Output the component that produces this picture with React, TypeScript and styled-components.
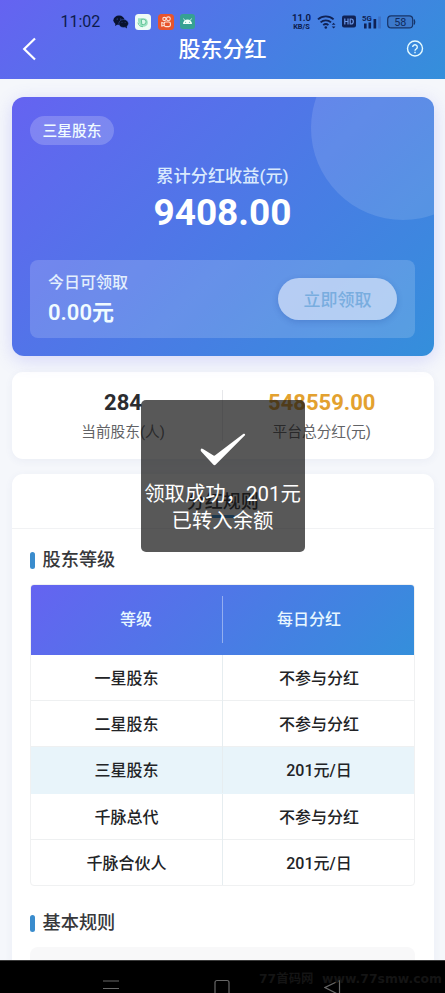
import React from 'react';
import styled, { createGlobalStyle } from 'styled-components';

const Global = createGlobalStyle`
  *, *::before, *::after { box-sizing: border-box; }
  html, body { margin: 0; padding: 0; overflow: hidden; }
  body {
    font-family: Roboto, 'Noto Sans CJK SC', sans-serif;
    color: #2c2d30;
    background: #f5f7fb;
  }
`;

const gradient = 'linear-gradient(135deg, #6563f1 0%, #348fdb 100%)';

const Screen = styled.div`
  width: 445px;
  height: 993px;
  display: flex;
  flex-direction: column;
  overflow: hidden;
  position: relative;
  background: #f5f7fb;
`;

const Header = styled.header`
  flex: none;
  height: 79px;
  background: ${gradient};
`;

const StatusBar = styled.div`
  height: 31px;
  padding: 12px 29px 0 60.5px;
  display: flex;
  justify-content: space-between;
  color: #0c1b4c;
`;

const StatusGroup = styled.div<{ $gap: number }>`
  display: flex;
  align-items: center;
  gap: ${p => p.$gap}px;
  height: 19px;
`;

const Clock = styled.span`
  width: 46px;
  font-size: 16px;
  line-height: 19px;
  white-space: nowrap;
`;

const Speed = styled.div`
  width: 19px;
  display: flex;
  flex-direction: column;
  align-items: center;
  font-weight: 700;
  font-size: 9.5px;
  line-height: 10px;
  white-space: nowrap;
`;

const SpeedUnit = styled.span`
  font-size: 7.4px;
  line-height: 8px;
`;

const TitleBar = styled.div`
  height: 36px;
  padding: 0 21px;
  display: grid;
  grid-template-columns: 18px 1fr 18px;
  align-items: center;
`;

const PageTitle = styled.h1`
  margin: 2px 0 0;
  text-align: center;
  color: #fff;
  font-size: 22px;
  line-height: 30px;
  font-weight: 500;
`;

const Content = styled.main`
  flex: 1;
  min-height: 0;
  overflow: hidden;
  padding: 18px 11.5px 0 12px;
  display: flex;
  flex-direction: column;
`;

const IncomeCard = styled.section`
  flex: none;
  height: 259px;
  padding: 19px 18.5px 18px 18px;
  border-radius: 12px;
  background: ${gradient};
  box-shadow: 0 4px 18px rgba(99, 102, 241, 0.22);
  display: flex;
  flex-direction: column;
  overflow: hidden;
  color: #f0fbff;
  position: relative;
`;

const Glow = styled.div`
  position: absolute;
  right: -61px;
  top: -61px;
  width: 184px;
  height: 184px;
  border-radius: 50%;
  background: rgba(255, 255, 255, 0.12);
`;

const LevelTag = styled.span`
  align-self: flex-start;
  width: 84px;
  height: 29px;
  padding-top: 1px;
  border-radius: 15px;
  background: rgba(255, 255, 255, 0.2);
  font-size: 14.7px;
  line-height: 29px;
  font-weight: 500;
  text-align: center;
`;

const IncomeLabel = styled.div`
  margin-top: 18px;
  text-align: center;
  font-size: 17.2px;
  line-height: 26px;
  color: #d9e9fd;
  font-weight: 500;
`;

const IncomeValue = styled.div`
  margin-top: 3px;
  text-align: center;
  font-size: 37px;
  line-height: 42px;
  font-weight: 700;
  color: #fff;
`;

const ClaimPanel = styled.div`
  margin-top: auto;
  height: 78px;
  padding: 0 18px;
  border-radius: 8px;
  background: rgba(255, 255, 255, 0.16);
  display: flex;
  align-items: center;
  justify-content: space-between;
`;

const ClaimLabel = styled.div`
  font-size: 16px;
  line-height: 24px;
  font-weight: 500;
  color: #e3effd;
`;

const ClaimValue = styled.div`
  margin-top: 3px;
  font-size: 22px;
  line-height: 29px;
  font-weight: 600;
`;

const ClaimButton = styled.button`
  width: 119px;
  height: 42px;
  padding: 1px 0 0;
  border: 0;
  border-radius: 21px;
  background: rgba(226, 234, 251, 0.66);
  box-shadow: 0 2px 6px rgba(20, 50, 140, 0.2);
  color: #79addf;
  font: 500 17px/42px Roboto, 'Noto Sans CJK SC', sans-serif;
`;

const StatsCard = styled.section`
  flex: none;
  margin-top: 16px;
  height: 87px;
  border-radius: 11px;
  background: #fff;
  box-shadow: 0 2px 8px rgba(70, 80, 150, 0.06);
  display: grid;
  grid-template-columns: 210px 1px 1fr;
  align-items: center;
`;

const Separator = styled.div<{ $light?: boolean }>`
  width: 1px;
  height: ${p => (p.$light ? 47 : 51)}px;
  background: ${p => (p.$light ? 'rgba(255,255,255,0.4)' : '#e6e7ea')};
`;

const Stat = styled.div<{ $left?: number; $right?: number }>`
  padding: 1px ${p => p.$right ?? 0}px 0 ${p => p.$left ?? 0}px;
  text-align: center;
`;

const StatValue = styled.div<{ $color: string }>`
  color: ${p => p.$color};
  font-size: 22px;
  line-height: 28px;
  font-weight: 700;
`;

const StatLabel = styled.div`
  margin-top: 3px;
  color: #626366;
  font-size: 14.7px;
  line-height: 24px;
`;

const RulesCard = styled.section`
  flex: none;
  margin-top: 15px;
  height: 520px;
  border-radius: 11px;
  background: #fff;
  box-shadow: 0 2px 8px rgba(70, 80, 150, 0.06);
`;

const RulesHead = styled.div`
  height: 55px;
  padding-top: 14px;
  border-bottom: 1px solid #f1f2f4;
  display: flex;
  flex-direction: column;
  align-items: center;
`;

const RulesTitle = styled.h2`
  margin: 0;
  font-size: 18px;
  line-height: 27px;
  font-weight: 500;
`;

const Underline = styled.div`
  width: 24px;
  height: 3px;
  border-radius: 2px;
  background: #348fdb;
`;

const RulesBody = styled.div`
  padding: 17px 19px 0 18px;
`;

const SectionTitle = styled.h3`
  margin: 0;
  height: 28px;
  display: flex;
  align-items: center;
  gap: 7.5px;
  font-size: 18.2px;
  line-height: 28px;
  font-weight: 500;
  color: #37383b;

  &::before {
    content: '';
    width: 5px;
    height: 17px;
    border-radius: 3px;
    background: #3a8ccd;
  }
`;

const Table = styled.div`
  margin: 10px 0 23px;
  width: 385px;
  height: 302px;
  border: 1px solid #f0f1f2;
  border-radius: 4px;
  overflow: hidden;
`;

const TableHead = styled.div`
  margin: -1px -1px 0;
  height: 71px;
  background: ${gradient};
  display: grid;
  grid-template-columns: 192px 1px 192px;
  align-items: center;
`;

const HeadCell = styled.div<{ $left?: number; $right?: number }>`
  padding: 1px ${p => p.$right ?? 0}px 0 ${p => p.$left ?? 0}px;
  text-align: center;
  color: #e8f7ff;
  font-size: 16px;
  line-height: 24px;
  font-weight: 500;
`;

const Row = styled.div<{ $active?: boolean }>`
  margin: 0 -1px;
  height: 46.2px;
  display: grid;
  grid-template-columns: 193px 192px;
  border-bottom: 1px solid ${p => (p.$active ? '#e8f4fa' : '#eef0f1')};
  background: ${p => (p.$active ? '#e8f4fa' : 'transparent')};

  &:last-child { border-bottom: 0; }
`;

const Cell = styled.div`
  text-align: center;
  font-size: 16px;
  line-height: 47px;
  height: 46px;
  font-weight: 500;
  color: #222326;

  &:first-child { border-right: 1px solid #e6edf0; padding-left: 1px; }
`;

const RuleBox = styled.div`
  margin-top: 10px;
  height: 60px;
  border-radius: 8px;
  background: #f8f8f9;
`;

const NavBar = styled.footer`
  flex: none;
  height: 33px;
  background: #000;
  border-top: 1px solid #3b3b3b;
  padding: 18px 103px 0 103px;
  display: flex;
  justify-content: space-between;
  align-items: flex-start;
  position: relative;
  overflow: hidden;
`;

const Watermark = styled.span`
  position: absolute;
  left: 259px;
  top: 9px;
  font-family: 'DejaVu Sans', 'Noto Sans CJK SC', sans-serif;
  font-weight: 700;
  font-size: 12.4px;
  line-height: 18px;
  color: #141414;
  white-space: pre;
`;

const Toast = styled.div`
  position: absolute;
  left: 140.5px;
  top: 400px;
  width: 164px;
  height: 152px;
  padding-top: 32px;
  border-radius: 5px;
  background: rgba(17, 17, 17, 0.7);
  display: flex;
  flex-direction: column;
  align-items: center;
`;

const ToastText = styled.div`
  margin-top: 15px;
  text-align: center;
  color: #fff;
  font-size: 20.4px;
  line-height: 27px;
  white-space: nowrap;
`;

const levels = [
  { name: '一星股东', daily: '不参与分红' },
  { name: '二星股东', daily: '不参与分红' },
  { name: '三星股东', daily: '201元/日', active: true },
  { name: '千脉总代', daily: '不参与分红' },
  { name: '千脉合伙人', daily: '201元/日' },
];

const WechatIcon = () => (
  <svg width="16" height="14" viewBox="0 0 16 14">
    <ellipse cx="6" cy="5.2" rx="5.6" ry="4.7" fill="#08122f" />
    <path d="M2.5 8.5 2 11l2.6-1.4z" fill="#08122f" />
    <ellipse cx="10.6" cy="8.5" rx="4.8" ry="4" fill="#08122f" stroke="#4b70e0" strokeWidth=".4" />
    <path d="m12 12 2 1.5-.3-2.6z" fill="#08122f" />
    <g fill="#4b70e0">
      <circle cx="4.2" cy="4" r=".5" /><circle cx="7.8" cy="4" r=".5" />
      <circle cx="9" cy="7.6" r=".4" /><circle cx="12.1" cy="7.6" r=".4" />
    </g>
  </svg>
);

const ChatAppIcon = () => (
  <svg width="16" height="16" viewBox="0 0 16 16">
    <rect width="16" height="16" rx="3.5" fill="#effcf6" />
    <path d="M3 4.200h5.500a4.300 4.300 0 1 1-4.100 5.500L3 7.500z" fill="#9be2c0" />
    <path d="M6.300 5.300h2.200a2.600 2.600 0 0 1 0 5.200H6.800z" fill="#dcf8ea" stroke="#62c498" strokeWidth="1" />
    <path d="M3 8.500a5 5 0 0 0 5 4.200" fill="none" stroke="#64c99c" strokeWidth="1" />
  </svg>
);

const VideoAppIcon = () => (
  <svg width="16" height="16" viewBox="0 0 16 16">
    <rect width="16" height="16" rx="3.5" fill="#e7542c" />
    <g fill="none" stroke="#fce5da" strokeWidth="1.1">
      <circle cx="6.4" cy="5" r="1.6" /><circle cx="10.4" cy="4.800" r="1.900" />
      <rect x="6.200" y="8" width="6.200" height="4.600" rx="1.500" />
      <path d="M6 9.200 3.800 8.500v3.600L6 11.400" />
    </g>
  </svg>
);

const AndroidIcon = () => (
  <svg width="15" height="15" viewBox="0 0 15 15">
    <rect width="15" height="15" rx="3" fill="#36a093" />
    <path d="M3 10a4.500 4.500 0 0 1 9 0z" fill="#effff9" />
    <path d="m4.800 6.500-1.300-2m6.700 2 1.300-2" stroke="#effff9" strokeWidth=".8" />
    <circle cx="5.600" cy="8.300" r=".5" fill="#36a093" /><circle cx="9.400" cy="8.300" r=".5" fill="#36a093" />
  </svg>
);

const WifiIcon = () => (
  <svg width="20" height="16" viewBox="0 0 20 16" fill="none" stroke="#102255">
    <g strokeWidth="1.900">
      <path d="M1 5.400a11.500 11.500 0 0 1 15.600 0" />
      <path d="M3.600 8.400a7.700 7.700 0 0 1 10.400 0" />
      <path d="M6.200 11.100a4 4 0 0 1 5.200 0" />
    </g>
    <circle cx="8.800" cy="13.500" r="1.300" fill="#102255" stroke="none" />
    <path d="m14.700 10.700 1.900-2 1.900 2zm0 1.900 1.900 2 1.900-2z" fill="#102255" stroke="none" />
  </svg>
);

const HdIcon = () => (
  <svg width="14" height="13" viewBox="0 0 14 13">
    <rect y=".5" width="14" height="12" rx="2" fill="#102255" />
    <path d="M2.800 3.400v6.200M6 3.400v6.200M2.800 6.500H6M8.200 4v5h.9c1.500 0 2.200-.9 2.200-2.500S10.600 4 9.100 4z" fill="none" stroke="#6b98ea" strokeWidth="1.200" />
  </svg>
);

const SignalIcon = () => (
  <svg width="20" height="16" viewBox="0 0 20 16">
    <text x="0" y="6.800" fontFamily="Roboto" fontSize="7.800" fontWeight="700" fill="#102255">5G</text>
    <g fill="#102255">
      <rect x="2" y="9.500" width="2.600" height="5" /><rect x="6.500" y="8.500" width="2.600" height="6" />
      <rect x="11.500" y="5" width="2.700" height="9.500" />
    </g>
    <rect x="16.200" y="2.500" width="2.700" height="12" fill="#3c70c6" />
  </svg>
);

const BatteryIcon = () => (
  <svg width="29" height="14" viewBox="0 0 29 14">
    <rect x=".7" y=".9" width="25" height="12" rx="3.500" fill="#3c79cb" stroke="#173468" strokeWidth="1.200" />
    <path d="M27.200 4.500q1 2.500 0 5" fill="none" stroke="#173468" strokeWidth="1.300" />
    <text x="13.200" y="10.800" textAnchor="middle" fontFamily="Roboto" fontSize="10.800" fill="#102a5c">58</text>
  </svg>
);

export default function App() {
  return (
    <Screen>
      <Global />
      <Header>
        <StatusBar>
          <StatusGroup $gap={6.4}>
            <Clock>11:02</Clock>
            <WechatIcon />
            <ChatAppIcon />
            <VideoAppIcon />
            <AndroidIcon />
          </StatusGroup>
          <StatusGroup $gap={5.5}>
            <Speed>11.0<SpeedUnit>KB/S</SpeedUnit></Speed>
            <WifiIcon />
            <HdIcon />
            <SignalIcon />
            <BatteryIcon />
          </StatusGroup>
        </StatusBar>
        <TitleBar>
          <svg width="18" height="24" viewBox="0 0 18 24" fill="none" stroke="#fff" strokeWidth="2.200">
            <path d="M14 1.500 3.200 12 14 22.500" />
          </svg>
          <PageTitle>股东分红</PageTitle>
          <svg width="18" height="18" viewBox="0 0 18 18" fill="none" stroke="#e6fbff" strokeWidth="1.400">
            <circle cx="9" cy="8.500" r="7.500" />
            <path d="M6.700 7a2.300 2.300 0 1 1 3.500 2c-.8.500-1.200.8-1.200 1.700" />
            <path d="M9 11.800v1.400" />
          </svg>
        </TitleBar>
      </Header>

      <Content>
        <IncomeCard>
          <Glow />
          <LevelTag>三星股东</LevelTag>
          <IncomeLabel>累计分红收益(元)</IncomeLabel>
          <IncomeValue>9408.00</IncomeValue>
          <ClaimPanel>
            <div>
              <ClaimLabel>今日可领取</ClaimLabel>
              <ClaimValue>0.00元</ClaimValue>
            </div>
            <ClaimButton>立即领取</ClaimButton>
          </ClaimPanel>
        </IncomeCard>

        <StatsCard>
          <Stat $left={12}>
            <StatValue $color="#2b2c2f">284</StatValue>
            <StatLabel>当前股东(人)</StatLabel>
          </Stat>
          <Separator />
          <Stat $right={13}>
            <StatValue $color="#e3a12f">548559.00</StatValue>
            <StatLabel>平台总分红(元)</StatLabel>
          </Stat>
        </StatsCard>

        <RulesCard>
          <RulesHead>
            <RulesTitle>分红规则</RulesTitle>
            <Underline />
          </RulesHead>
          <RulesBody>
            <SectionTitle>股东等级</SectionTitle>
            <Table>
              <TableHead>
                <HeadCell $left={20}>等级</HeadCell>
                <Separator $light />
                <HeadCell $right={20}>每日分红</HeadCell>
              </TableHead>
              {levels.map(l => (
                <Row key={l.name} $active={l.active}>
                  <Cell>{l.name}</Cell>
                  <Cell>{l.daily}</Cell>
                </Row>
              ))}
            </Table>
            <SectionTitle>基本规则</SectionTitle>
            <RuleBox />
          </RulesBody>
        </RulesCard>
      </Content>

      <NavBar>
        <Watermark>77首码网  www.77smw.com</Watermark>
        <svg width="16" height="14" viewBox="0 0 16 14" stroke="#686868" strokeWidth="1.100">
          <path d="M0 2h16M0 9.500h16" />
        </svg>
        <svg width="16" height="16" viewBox="0 0 16 16" fill="none" stroke="#686868" strokeWidth="1.200">
          <rect x="1" y="1.500" width="14" height="15" rx="2" />
        </svg>
        <svg width="18" height="16" viewBox="0 0 18 16" fill="none" stroke="#686868" strokeWidth="1.200">
          <path d="M15.500 1.500 1 8.500l14.500 7.500z" />
        </svg>
      </NavBar>

      <Toast>
        <svg width="46" height="34" viewBox="0 0 46 34">
          <path d="M.8 17.200Q1.500 15.800 3 17L13.500 23.500Q14.500 24 15.500 23L43.500 1.800Q45 1.200 45.200 3L15.800 32.600Q14.500 34 13.200 32.600L1.200 19.500Q.4 18.500.8 17.200z" fill="#fff" />
        </svg>
        <ToastText>领取成功，201元<br />已转入余额</ToastText>
      </Toast>
    </Screen>
  );
}
